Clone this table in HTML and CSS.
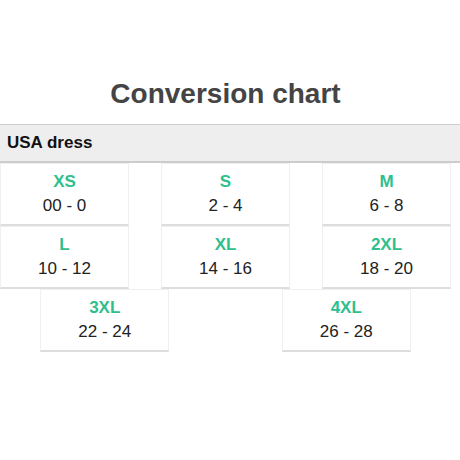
FILE: index.html
```html
<!DOCTYPE html>
<html>
<head>
<meta charset="utf-8">
<link rel="stylesheet" href="styles.css">
</head>
<body>
<div class="page">
  <h1 class="title">Conversion chart</h1>
  <div class="bar">USA dress</div>
  <div class="grid">
    <div class="cell"><div class="size">XS</div><div class="num">00 - 0</div></div>
    <div class="cell"><div class="size">S</div><div class="num">2 - 4</div></div>
    <div class="cell"><div class="size">M</div><div class="num">6 - 8</div></div>
    <div class="cell"><div class="size">L</div><div class="num">10 - 12</div></div>
    <div class="cell"><div class="size">XL</div><div class="num">14 - 16</div></div>
    <div class="cell"><div class="size">2XL</div><div class="num">18 - 20</div></div>
    <div class="cell"><div class="size">3XL</div><div class="num">22 - 24</div></div>
    <div class="cell"><div class="size">4XL</div><div class="num">26 - 28</div></div>
  </div>
</div>
</body>
</html>
```
FILE: styles.css
```css
html, body {
  margin: 0;
  padding: 0;
  overflow: hidden;
  background: #fff;
}
body {
  font-family: "Liberation Sans", Arial, sans-serif;
  width: 460px;
  height: 460px;
}
.page {
  width: 483px;
  margin-left: -16px;
  padding-top: 78px;
}
.title {
  margin: 0;
  font-size: 28px;
  line-height: 32px;
  font-weight: bold;
  color: #444;
  text-align: center;
}
.bar {
  margin-top: 14px;
  margin-left: 16px;
  height: 36px;
  line-height: 36px;
  padding-left: 7px;
  background: #eee;
  border-top: 1px solid #d0d0d0;
  border-bottom: 2px solid #ccc;
  font-size: 17px;
  font-weight: bold;
  color: #111;
}
.grid {
  display: flex;
  flex-wrap: wrap;
  justify-content: space-around;
}
.cell {
  box-sizing: border-box;
  width: 129px;
  height: 63px;
  padding-top: 6px;
  border: 1px solid #f0f0f0;
  border-bottom: 2px solid #ddd;
  text-align: center;
}
.size {
  font-size: 17px;
  line-height: 24px;
  font-weight: bold;
  color: #2fbf8f;
}
.num {
  font-size: 17px;
  line-height: 24px;
  color: #222;
}
```
